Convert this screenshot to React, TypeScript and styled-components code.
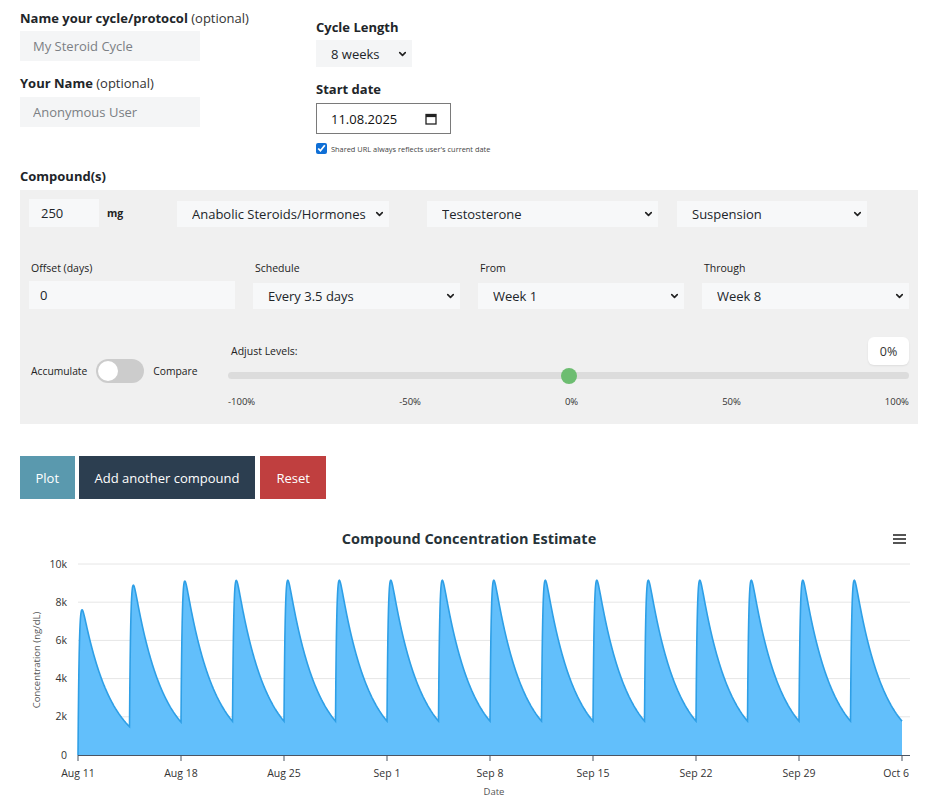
import React from "react";
import styled, { createGlobalStyle } from "styled-components";
import { ChevronDown } from "lucide-react";

const FONT = `"Open Sans", "Noto Sans", "DejaVu Sans", sans-serif`;

const Global = createGlobalStyle`
  html, body { margin: 0; padding: 0; background: #ffffff; }
  body { font-family: ${FONT}; color: #212529; }
  * { box-sizing: border-box; }
`;

const Page = styled.div`
  width: 943px;
  padding: 8px 25px 0 20px;
`;

const Top = styled.div`
  display: flex;
`;

const LeftCol = styled.div`
  width: 296px;
  display: flex;
  flex-direction: column;
`;

const RightCol = styled.div`
  display: flex;
  flex-direction: column;
  padding-top: 9px;
`;

const FieldLabel = styled.label<{ $mt?: number; $mb?: number }>`
  display: block;
  font-size: 13px;
  font-weight: 700;
  line-height: 20px;
  color: #212529;
  margin-top: ${(p) => p.$mt ?? 0}px;
  margin-bottom: ${(p) => p.$mb ?? 0}px;
  span {
    font-weight: 400;
    color: #333;
  }
`;

const PlainInput = styled.input<{ $w: number; $h: number; $pl?: number; $bg?: string }>`
  width: ${(p) => p.$w}px;
  height: ${(p) => p.$h}px;
  border: none;
  outline: none;
  background: ${(p) => p.$bg ?? "#f4f5f6"};
  padding: 0 0 0 ${(p) => p.$pl ?? 13}px;
  font-family: ${FONT};
  font-size: 13px;
  color: #212529;
  &::placeholder {
    color: #7b7f84;
  }
`;

const SelectWrap = styled.div<{ $w: number; $h: number; $ml?: number }>`
  position: relative;
  width: ${(p) => p.$w}px;
  height: ${(p) => p.$h}px;
  margin-left: ${(p) => p.$ml ?? 0}px;
  flex-shrink: 0;
`;

const NativeSelect = styled.select<{ $bg?: string }>`
  appearance: none;
  -webkit-appearance: none;
  width: 100%;
  height: 100%;
  border: none;
  outline: none;
  border-radius: 0;
  background: ${(p) => p.$bg ?? "#f7f8f9"};
  padding: 0 22px 0 15px;
  font-family: ${FONT};
  font-size: 13px;
  color: #212529;
`;

const Chevron = styled(ChevronDown)`
  position: absolute;
  right: 4px;
  top: 50%;
  transform: translateY(-50%);
  pointer-events: none;
  color: #222;
`;

type SelProps = { w: number; h: number; ml?: number; value: string; bg?: string };
const Select = ({ w, h, ml, value, bg }: SelProps) => (
  <SelectWrap $w={w} $h={h} $ml={ml}>
    <NativeSelect $bg={bg} defaultValue={value}>
      <option>{value}</option>
    </NativeSelect>
    <Chevron size={11} strokeWidth={3.6} />
  </SelectWrap>
);

const DateBox = styled.div`
  width: 135px;
  height: 31px;
  border: 1px solid #7a7a7a;
  background: #fff;
  display: flex;
  align-items: center;
  justify-content: space-between;
  padding: 0 13px 0 14px;
  font-size: 13px;
  color: #111;
`;

const CalIcon = () => (
  <svg width="12" height="12" viewBox="0 0 12 12">
    <rect x="1" y="1.5" width="10" height="9.5" fill="none" stroke="#222" strokeWidth="1.3" />
    <rect x="1" y="1.5" width="10" height="2.6" fill="#222" />
  </svg>
);

const CheckRow = styled.label`
  display: flex;
  align-items: center;
  margin-top: 9px;
  font-size: 7.4px;
  color: #444;
  input {
    margin: 0 4px 0 0;
    width: 11px;
    height: 11px;
    accent-color: #0f6fd6;
  }
`;

const SectionLabel = styled.div`
  font-size: 13px;
  font-weight: 700;
  line-height: 20px;
  margin-top: 12px;
  margin-bottom: 4px;
`;

const Panel = styled.div`
  width: 898px;
  background: #f0f0f0;
  padding: 9px 9px 15px 9px;
`;

const DoseRow = styled.div`
  display: flex;
  align-items: flex-end;
  height: 28px;
`;

const Unit = styled.span`
  margin-left: 8px;
  width: 70px;
  align-self: center;
  font-size: 10.5px;
  font-weight: 700;
  color: #222;
`;

const ScheduleGrid = styled.div`
  display: grid;
  grid-template-columns: repeat(4, 1fr);
  column-gap: 18px;
  margin-top: 34px;
  align-items: end;
`;

const Field = styled.div`
  display: flex;
  flex-direction: column;
`;

const SmallLabel = styled.div<{ $mb?: number }>`
  font-size: 10.5px;
  line-height: 15px;
  color: #222;
  margin-bottom: ${(p) => p.$mb ?? 5}px;
  padding-left: 2px;
`;

const LevelsRow = styled.div`
  display: flex;
  margin-top: 28px;
`;

const ModeToggle = styled.div`
  width: 199px;
  display: flex;
  align-items: center;
  margin-top: 22px;
  height: 24px;
  font-size: 10.3px;
  color: #222;
  padding-left: 2px;
  align-self: flex-start;
`;

const Switch = styled.div`
  width: 48px;
  height: 24px;
  border-radius: 12px;
  background: #cccccc;
  margin: 0 9px 0 9px;
  padding: 2px;
  display: flex;
  align-items: center;
`;

const Knob = styled.div`
  width: 20px;
  height: 20px;
  border-radius: 50%;
  background: #fff;
`;

const SliderBlock = styled.div`
  flex: 1;
  display: flex;
  flex-direction: column;
`;

const SliderHead = styled.div`
  display: flex;
  justify-content: space-between;
  align-items: center;
  height: 28px;
  font-size: 10.5px;
  color: #222;
  padding-left: 3px;
`;

const ValueBadge = styled.div`
  width: 41px;
  height: 28px;
  background: #fff;
  border-radius: 6px;
  box-shadow: 0 1px 2px rgba(0, 0, 0, 0.08);
  display: flex;
  align-items: center;
  justify-content: center;
  font-size: 12.5px;
  color: #333;
`;

const Track = styled.div`
  position: relative;
  height: 7px;
  margin-top: 7px;
  border-radius: 4px;
  background: #dcdcdc;
`;

const Thumb = styled.div`
  position: absolute;
  top: 50%;
  width: 16px;
  height: 16px;
  border-radius: 50%;
  background: #6dbd71;
  transform: translate(-50%, -50%);
`;

const TickLabels = styled.div`
  display: flex;
  justify-content: space-between;
  margin-top: 15px;
  font-size: 9.5px;
  line-height: 15px;
  color: #333;
`;

const ButtonRow = styled.div`
  display: flex;
  gap: 4px;
  margin-top: 32px;
`;

const ActionButton = styled.button<{ $bg: string; $ml?: number; $px?: number }>`
  height: 43px;
  padding: 0 ${(p) => p.$px ?? 16}px;
  border: none;
  background: ${(p) => p.$bg};
  color: #fff;
  font-family: ${FONT};
  font-size: 13px;
  margin-left: ${(p) => p.$ml ?? 0}px;
`;

const ChartBox = styled.div`
  margin-top: 21px;
  width: 898px;
  height: 280px;
`;

// ---- chart data ----
const KE = 0.52;
const KA = 12;
const AMP = 9160;
const conc = (t: number) => {
  let s = 0;
  for (let i = 0; i < 16; i++) {
    const dt = t - 3.5 * i;
    if (dt > 0) s += AMP * (Math.exp(-KE * dt) - Math.exp(-KA * dt));
  }
  return s;
};
const PX_DAY = 103 / 7;
const X0 = 58;
const Y0 = 235;
const PY = 191 / 10000;
const xs = (t: number) => X0 + t * PX_DAY;
const ys = (v: number) => Y0 - v * PY;

const buildPaths = () => {
  const pts: string[] = [];
  for (let t = 0; t <= 56.0001; t += 0.02) {
    pts.push(`${xs(t).toFixed(2)},${ys(conc(t)).toFixed(2)}`);
  }
  const line = "M" + pts.join(" L");
  const area = `M${xs(0)},${Y0} L` + pts.join(" L") + ` L${xs(56)},${Y0} Z`;
  return { line, area };
};

const xLabels = ["Aug 11", "Aug 18", "Aug 25", "Sep 1", "Sep 8", "Sep 15", "Sep 22", "Sep 29", "Oct 6"];
const yLabels = ["0", "2k", "4k", "6k", "8k", "10k"];

const Chart = () => {
  const { line, area } = React.useMemo(buildPaths, []);
  return (
    <svg width="898" height="280" viewBox="0 0 898 280" style={{ display: "block", fontFamily: FONT }}>
      <text x="449" y="24" textAnchor="middle" fontSize="14.5" fontWeight="700" fill="#263238">
        Compound Concentration Estimate
      </text>
      <g fill="#555">
        <rect x="873" y="14" width="13" height="2" />
        <rect x="873" y="18" width="13" height="2" />
        <rect x="873" y="22" width="13" height="2" />
      </g>
      {yLabels.map((l, i) => {
        const y = ys(i * 2000);
        return (
          <g key={l}>
            {i > 0 && <line x1="58" x2="890" y1={y} y2={y} stroke="#e6e6e6" strokeWidth="1" />}
            <text x="47" y={y + 3.5} textAnchor="end" fontSize="10.5" fill="#333">
              {l}
            </text>
          </g>
        );
      })}
      <path d={area} fill="#62bffb" />
      <path d={line} fill="none" stroke="#2e9fe6" strokeWidth="1.6" />
      <line x1="58" x2="890" y1="235.5" y2="235.5" stroke="#4b5563" strokeWidth="1.2" />
      {xLabels.map((l, i) => {
        const x = X0 + i * 103;
        const last = i === xLabels.length - 1;
        return (
          <g key={l}>
            <line x1={x} x2={x} y1="235" y2="241" stroke="#4b5563" strokeWidth="1" />
            <text x={last ? 889 : x} y="257" textAnchor={last ? "end" : "middle"} fontSize="10.5" fill="#333">
              {l}
            </text>
          </g>
        );
      })}
      <text x="474" y="275" textAnchor="middle" fontSize="9.5" fill="#555">
        Date
      </text>
      <text transform="translate(20,140) rotate(-90)" textAnchor="middle" fontSize="9.5" fill="#555">
        Concentration (ng/dL)
      </text>
    </svg>
  );
};

export default function App() {
  return (
    <>
      <Global />
      <Page>
        <Top>
          <LeftCol>
            <FieldLabel $mb={3}>
              Name your cycle/protocol <span>(optional)</span>
            </FieldLabel>
            <PlainInput $w={180} $h={30} placeholder="My Steroid Cycle" />
            <FieldLabel $mt={12} $mb={4}>
              Your Name <span>(optional)</span>
            </FieldLabel>
            <PlainInput $w={180} $h={30} placeholder="Anonymous User" />
          </LeftCol>
          <RightCol>
            <FieldLabel $mb={3}>Cycle Length</FieldLabel>
            <Select w={96} h={27} value="8 weeks" bg="#f4f5f6" />
            <FieldLabel $mt={12} $mb={4}>
              Start date
            </FieldLabel>
            <DateBox>
              <span>11.08.2025</span>
              <CalIcon />
            </DateBox>
            <CheckRow>
              <input type="checkbox" defaultChecked />
              Shared URL always reflects user's current date
            </CheckRow>
          </RightCol>
        </Top>

        <SectionLabel>Compound(s)</SectionLabel>
        <Panel>
          <DoseRow>
            <PlainInput $w={70} $h={28} $pl={12} $bg="#f7f8f9" defaultValue="250" />
            <Unit>mg</Unit>
            <Select w={212} h={26} value="Anabolic Steroids/Hormones" />
            <Select w={231} h={26} ml={38} value="Testosterone" />
            <Select w={190} h={26} ml={19} value="Suspension" />
          </DoseRow>

          <ScheduleGrid>
            <Field>
              <SmallLabel>Offset (days)</SmallLabel>
              <PlainInput $w={206} $h={28} $pl={11} $bg="#f7f8f9" defaultValue="0" />
            </Field>
            <Field>
              <SmallLabel $mb={7}>Schedule</SmallLabel>
              <Select w={207} h={26} value="Every 3.5 days" />
            </Field>
            <Field>
              <SmallLabel $mb={7}>From</SmallLabel>
              <Select w={206} h={26} value="Week 1" />
            </Field>
            <Field>
              <SmallLabel $mb={7}>Through</SmallLabel>
              <Select w={207} h={26} value="Week 8" />
            </Field>
          </ScheduleGrid>

          <LevelsRow>
            <ModeToggle>
              Accumulate
              <Switch>
                <Knob />
              </Switch>
              Compare
            </ModeToggle>
            <SliderBlock>
              <SliderHead>
                <span>Adjust Levels:</span>
                <ValueBadge>0%</ValueBadge>
              </SliderHead>
              <Track>
                <Thumb style={{ left: "50%" }} />
              </Track>
              <TickLabels>
                <span>-100%</span>
                <span>-50%</span>
                <span>0%</span>
                <span>50%</span>
                <span>100%</span>
              </TickLabels>
            </SliderBlock>
          </LevelsRow>
        </Panel>

        <ButtonRow>
          <ActionButton $bg="#5a99ae" $px={15.5}>
            Plot
          </ActionButton>
          <ActionButton $bg="#2c3e50">Add another compound</ActionButton>
          <ActionButton $bg="#c03f3f" $ml={1}>
            Reset
          </ActionButton>
        </ButtonRow>

        <ChartBox>
          <Chart />
        </ChartBox>
      </Page>
    </>
  );
}
